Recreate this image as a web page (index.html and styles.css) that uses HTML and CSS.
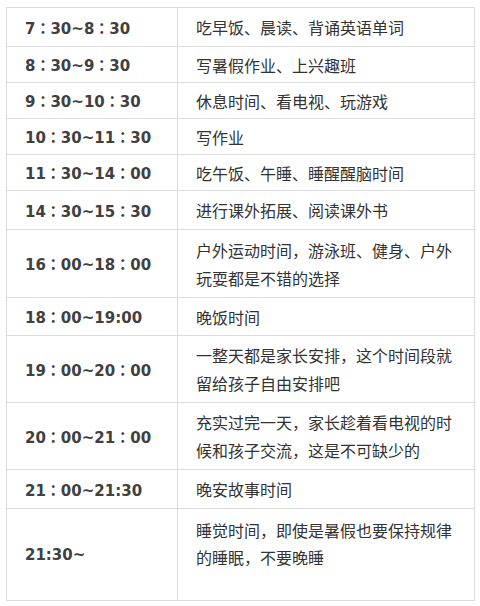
FILE: index.html
```html
<!DOCTYPE html>
<html lang="zh-CN">
<head>
<meta charset="utf-8">
<title>暑假作息时间表</title>
<link rel="stylesheet" href="styles.css">
</head>
<body>
<table class="schedule">
  <colgroup><col class="c-time"><col class="c-task"></colgroup>
  <tbody>
    <tr class="h39"><td class="time">7：30~8：30</td><td class="task">吃早饭、晨读、背诵英语单词</td></tr>
    <tr class="h36"><td class="time">8：30~9：30</td><td class="task">写暑假作业、上兴趣班</td></tr>
    <tr class="h36"><td class="time">9：30~10：30</td><td class="task">休息时间、看电视、玩游戏</td></tr>
    <tr class="h36"><td class="time">10：30~11：30</td><td class="task">写作业</td></tr>
    <tr class="h36"><td class="time">11：30~14：00</td><td class="task">吃午饭、午睡、睡醒醒脑时间</td></tr>
    <tr class="h39"><td class="time">14：30~15：30</td><td class="task">进行课外拓展、阅读课外书</td></tr>
    <tr class="h68"><td class="time">16：00~18：00</td><td class="task">户外运动时间，游泳班、健身、户外玩耍都是不错的选择</td></tr>
    <tr class="h38"><td class="time">18：00~19:00</td><td class="task">晚饭时间</td></tr>
    <tr class="h67"><td class="time">19：00~20：00</td><td class="task">一整天都是家长安排，这个时间段就留给孩子自由安排吧</td></tr>
    <tr class="h67"><td class="time">20：00~21：00</td><td class="task">充实过完一天，家长趁着看电视的时候和孩子交流，这是不可缺少的</td></tr>
    <tr class="h39"><td class="time">21：00~21:30</td><td class="task">晚安故事时间</td></tr>
    <tr class="h92"><td class="time">21:30~</td><td class="task task-top">睡觉时间，即使是暑假也要保持规律的睡眠，不要晚睡</td></tr>
  </tbody>
</table>
</body>
</html>
```

FILE: styles.css
```css
html, body {
  margin: 0;
  background: #ffffff;
}

body {
  padding: 7px 5px 0 6px;
}

.schedule {
  border-collapse: collapse;
  width: 469px;
  table-layout: fixed;
}

.c-time { width: 171px; }

.schedule td {
  border: 1px solid #dcdcdc;
  padding: 0 17px 0 18px;
  vertical-align: middle;
  box-sizing: border-box;
}

.time {
  font-family: "DejaVu Sans", "Noto Sans CJK TC", sans-serif;
  font-weight: bold;
  font-size: 15px;
  color: #404040;
  white-space: nowrap;
}

.task {
  font-family: "Noto Sans CJK SC", sans-serif;
  font-size: 16px;
  line-height: 28px;
  color: #333333;
}

.schedule .task-top {
  vertical-align: top;
  padding-top: 8px;
  line-height: 27px;
}

.h36 { height: 36px; }
.h38 { height: 38px; }
.h39 { height: 39px; }
.h67 { height: 67px; }
.h68 { height: 68px; }
.h92 { height: 92px; }
```
